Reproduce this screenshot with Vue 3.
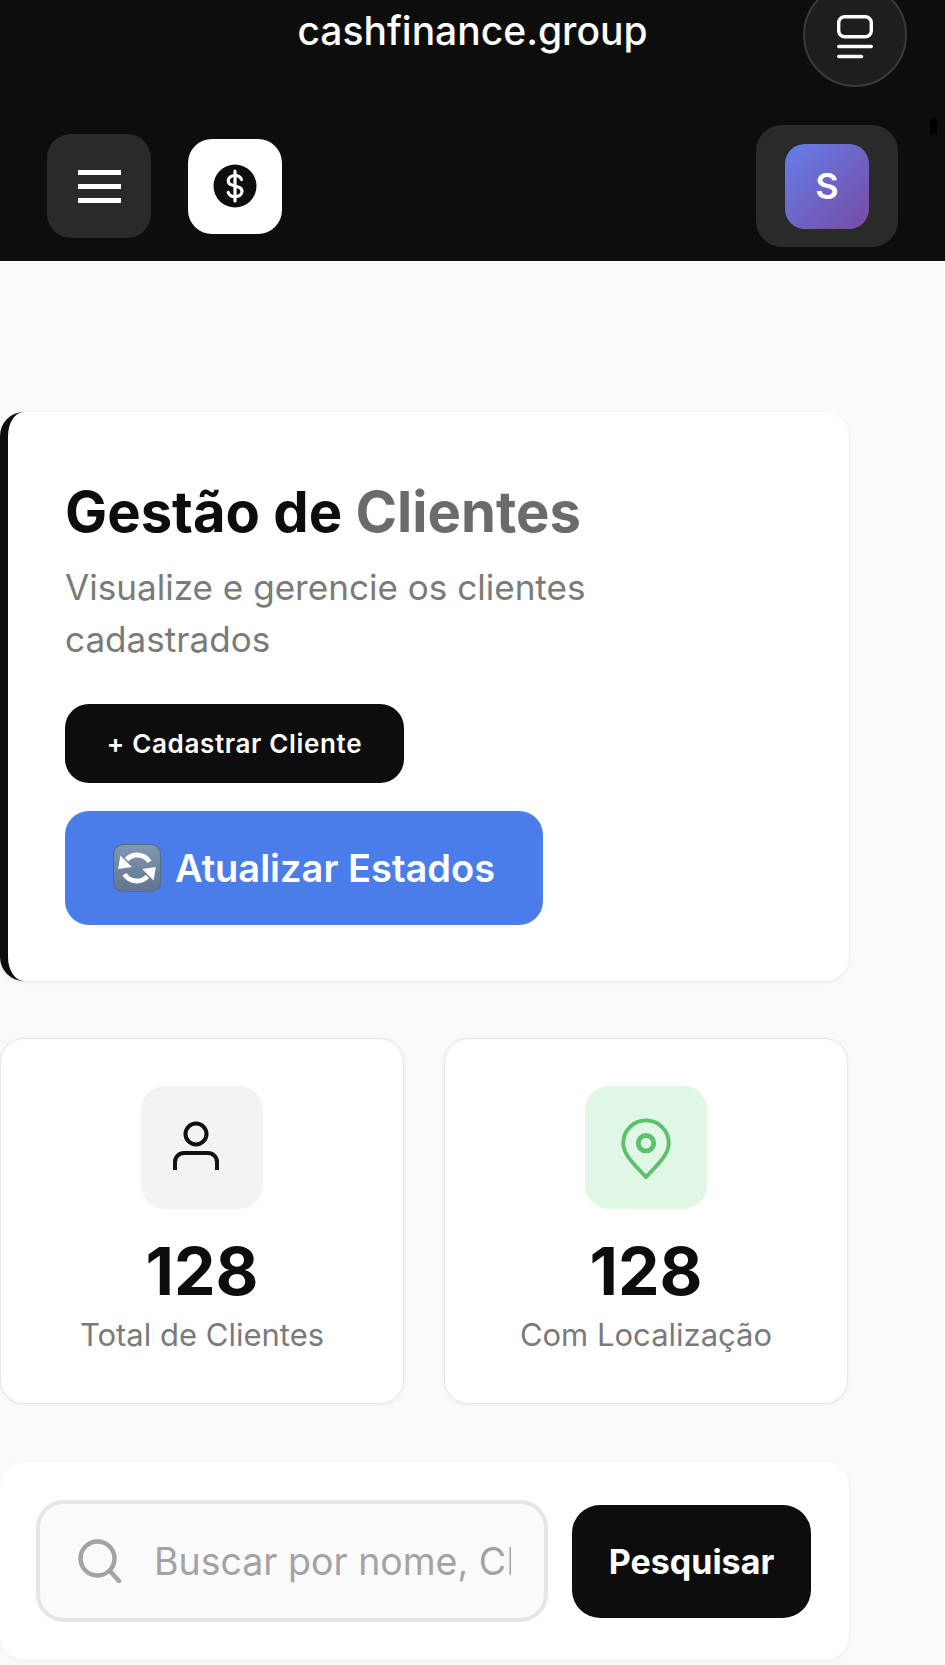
<template>
  <div class="page">
    <header class="topbar">
      <div class="browser-row">
        <span class="domain">cashfinance.group</span>
        <button class="tabs-btn" aria-label="Abas">
          <svg width="36" height="44" viewBox="0 0 36 44" fill="none" stroke="#fff" stroke-width="3.4" stroke-linecap="round">
            <rect x="1.7" y="1.7" width="32.6" height="20" rx="6" />
            <line x1="1.7" y1="31.5" x2="34.3" y2="31.5" />
            <line x1="1.7" y1="41.5" x2="24.5" y2="41.5" />
          </svg>
        </button>
        <span class="scroll-mark"></span>
      </div>
      <div class="nav-row">
        <button class="menu-btn" aria-label="Menu">
          <span></span>
          <span></span>
          <span></span>
        </button>
        <div class="logo">
          <svg width="44" height="44" viewBox="0 0 44 44">
            <circle cx="22" cy="22" r="21.5" fill="#0d0d0d" />
            <path d="M28.500 15.500c-1-2.600-3.600-4-6.500-4-3.800 0-6.800 2.200-6.800 5.400 0 7 13.800 3.200 13.800 10.400 0 3.200-3 5.400-7 5.400-3.100 0-5.800-1.500-6.800-4.200" fill="none" stroke="#fff" stroke-width="3.2" stroke-linecap="round" />
            <line x1="22" y1="7" x2="22" y2="37" stroke="#fff" stroke-width="3.2" stroke-linecap="round" />
          </svg>
        </div>
        <div class="user-box">
          <div class="avatar">S</div>
        </div>
      </div>
    </header>

    <main class="content">
      <section class="hero-card">
        <h1 class="hero-title">Gestão de <span>Clientes</span></h1>
        <p class="hero-sub">Visualize e gerencie os clientes cadastrados</p>
        <div class="hero-actions">
          <button class="btn-new">+ Cadastrar Cliente</button>
          <button class="btn-refresh">
            <svg class="refresh-icon" width="48" height="48" viewBox="0 0 46 46">
              <defs>
                <linearGradient id="refreshBg" x1="0" y1="0" x2="0" y2="1">
                  <stop offset="0" stop-color="#8298b2" />
                  <stop offset="1" stop-color="#607690" />
                </linearGradient>
              </defs>
              <rect x="0.5" y="0.5" width="45" height="45" rx="9" fill="url(#refreshBg)" stroke="#56697f" />
              <path d="M35 17A14 14 0 0 0 13 15" fill="none" stroke="#fff" stroke-width="4.6" />
              <path d="M11 29A14 14 0 0 0 33 31" fill="none" stroke="#fff" stroke-width="4.6" />
              <path d="M7 11l11 11L5 24z" fill="#fff" />
              <path d="M39 35L28 24l13-2z" fill="#fff" />
            </svg>
            Atualizar Estados
          </button>
        </div>
      </section>

      <section class="stats">
        <div v-for="stat in stats" :key="stat.label" class="stat-card">
          <div class="stat-icon" :class="stat.tone">
            <svg v-if="stat.tone === 'neutral'" class="person" width="46" height="50" viewBox="0 0 46 50" fill="none" stroke="#111" stroke-width="4">
              <circle cx="23" cy="13" r="10.500" />
              <path d="M2 49v-8a9 9 0 0 1 9-9h24a9 9 0 0 1 9 9v8" />
            </svg>
            <svg v-else class="pin" width="52" height="62" viewBox="0 0 52 64" fill="none" stroke="#5cc06c" stroke-width="4">
              <path d="M26 61C15 49 2.500 38 2.500 26a23.500 23.500 0 0 1 47 0C49.500 38 37 49 26 61z" stroke-linejoin="round" />
              <circle cx="26" cy="26" r="8" stroke-width="5" />
            </svg>
          </div>
          <div class="stat-value">{{ stat.value }}</div>
          <div class="stat-label">{{ stat.label }}</div>
        </div>
      </section>

      <section class="search-card">
        <label class="search-field">
          <svg class="search-icon" width="44" height="44" viewBox="0 0 44 44" fill="none" stroke="#a3a3a3" stroke-width="4.500" stroke-linecap="round">
            <circle cx="19.500" cy="19.500" r="17" />
            <line x1="32" y1="32" x2="41" y2="42" />
          </svg>
          <input type="text" placeholder="Buscar por nome, CPF ou cidade" />
        </label>
        <button class="btn-search">Pesquisar</button>
      </section>
    </main>
  </div>
</template>

<script setup>
const stats = [
  { label: 'Total de Clientes', value: 128, tone: 'neutral' },
  { label: 'Com Localização', value: 128, tone: 'green' }
]
</script>

<style>
html,
body {
  margin: 0;
  background: #fafafa;
}
</style>

<style scoped>
.page {
  height: 1665px;
  overflow: hidden;
  background: #fafafa;
  font-family: Inter, "Liberation Sans", sans-serif;
}

button {
  font-family: inherit;
  border: none;
  cursor: pointer;
}

/* Top bar */
.topbar {
  position: relative;
  height: 261px;
  background: #0d0d0d;
  overflow: hidden;
}

.browser-row {
  height: 125px;
  text-align: center;
}

.domain {
  display: block;
  padding-top: 8px;
  font-size: 39px;
  line-height: 46px;
  font-weight: 500;
  color: #fff;
}

.tabs-btn {
  position: absolute;
  top: -17px;
  left: 803px;
  width: 104px;
  height: 104px;
  padding: 3px 0 0;
  border-radius: 50%;
  border: 2px solid #3a3a3a;
  background: #1e1e1e;
  display: flex;
  align-items: center;
  justify-content: center;
  box-sizing: border-box;
}

.tabs-btn svg {
  display: block;
}

.scroll-mark {
  position: absolute;
  top: 118px;
  left: 930px;
  width: 7px;
  height: 17px;
  border-radius: 3px;
  background: #000;
}

.nav-row {
  display: flex;
  align-items: center;
  height: 122px;
  padding: 0 47px;
}

.menu-btn {
  width: 104px;
  height: 104px;
  border-radius: 24px;
  background: #2a2a2a;
  display: flex;
  flex-direction: column;
  align-items: center;
  justify-content: center;
  gap: 9px;
  padding: 0;
}

.menu-btn span {
  display: block;
  width: 43px;
  height: 5px;
  background: #fff;
}

.logo {
  width: 94px;
  height: 95px;
  margin-left: 37px;
  border-radius: 24px;
  background: #fff;
  display: flex;
  align-items: center;
  justify-content: center;
}

.user-box {
  width: 142px;
  height: 122px;
  margin-left: auto;
  border-radius: 26px;
  background: #2a2a2a;
  display: flex;
  align-items: center;
  justify-content: center;
}

.avatar {
  width: 84px;
  height: 85px;
  border-radius: 20px;
  background: linear-gradient(135deg, #667eea, #764ba2);
  color: #fff;
  font-size: 36px;
  font-weight: 600;
  display: flex;
  align-items: center;
  justify-content: center;
}

/* Content */
.content {
  width: 849px;
  padding-top: 151px;
  display: flex;
  flex-direction: column;
  gap: 57px;
}

.hero-card {
  box-sizing: border-box;
  height: 569px;
  padding: 69px 57px 0;
  background: #fff;
  border-left: 8px solid #0d0d0d;
  border-radius: 24px;
  box-shadow: 0 1px 4px rgba(0, 0, 0, 0.08);
}

.hero-title {
  margin: 0;
  font-size: 56.2px;
  line-height: 62px;
  font-weight: 700;
  color: #0d0d0d;
}

.hero-title span {
  color: #6b6b6b;
}

.hero-sub {
  width: 580px;
  margin: 18px 0 0;
  font-size: 35.1px;
  line-height: 52px;
  color: #7a7a7a;
}

.hero-actions {
  display: flex;
  flex-direction: column;
  align-items: flex-start;
  gap: 28px;
  margin-top: 39px;
}

.btn-new {
  width: 339px;
  height: 79px;
  border-radius: 24px;
  background: #0d0d0d;
  color: #fff;
  font-size: 26px;
  font-weight: 600;
  letter-spacing: 0.65px;
}

.btn-refresh {
  width: 478px;
  height: 114px;
  border-radius: 24px;
  background: #4a7dea;
  color: #fff;
  font-size: 38px;
  font-weight: 600;
  display: flex;
  align-items: center;
  justify-content: center;
  gap: 14px;
}

.stats {
  display: grid;
  grid-template-columns: 404px 404px;
  gap: 40px;
}

.stat-card {
  box-sizing: border-box;
  height: 366px;
  padding-top: 47px;
  background: #fff;
  border: 1px solid #e6e6e6;
  border-radius: 24px;
  box-shadow: 0 1px 4px rgba(0, 0, 0, 0.06);
  display: flex;
  flex-direction: column;
  align-items: center;
}

.stat-icon {
  width: 122px;
  height: 123px;
  border-radius: 24px;
  display: flex;
  align-items: center;
  justify-content: center;
}

.stat-icon.neutral {
  background: #f3f3f3;
}

.stat-icon.green {
  background: #dff7e4;
}

.person {
  margin: -3px 0 0 -13px;
}

.pin {
  margin-top: 2px;
}

.stat-value {
  margin-top: 25px;
  font-size: 66px;
  line-height: 74px;
  font-weight: 700;
  color: #0d0d0d;
}

.stat-label {
  margin-top: 7px;
  font-size: 31px;
  line-height: 40px;
  color: #7a7a7a;
}

.search-card {
  box-sizing: border-box;
  height: 198px;
  margin-top: 1px;
  padding: 0 38px 0 36px;
  background: #fff;
  border-radius: 24px;
  box-shadow: 0 1px 4px rgba(0, 0, 0, 0.06);
  display: flex;
  align-items: center;
  justify-content: space-between;
}

.search-field {
  box-sizing: border-box;
  width: 512px;
  height: 122px;
  padding: 0 33px 0 38px;
  border: 4px solid #e5e5e5;
  border-radius: 28px;
  background: #fafafa;
  display: flex;
  align-items: center;
  gap: 32px;
}

.search-icon {
  flex-shrink: 0;
}

.search-field input {
  flex: 1;
  min-width: 0;
  padding: 0;
  border: none;
  outline: none;
  background: transparent;
  font-family: inherit;
  font-size: 37.5px;
  color: #111;
}

.search-field input::placeholder {
  color: #a3a3a3;
  opacity: 1;
}

.btn-search {
  width: 239px;
  height: 113px;
  border-radius: 28px;
  background: #0d0d0d;
  color: #fff;
  font-size: 34px;
  font-weight: 700;
}
</style>
